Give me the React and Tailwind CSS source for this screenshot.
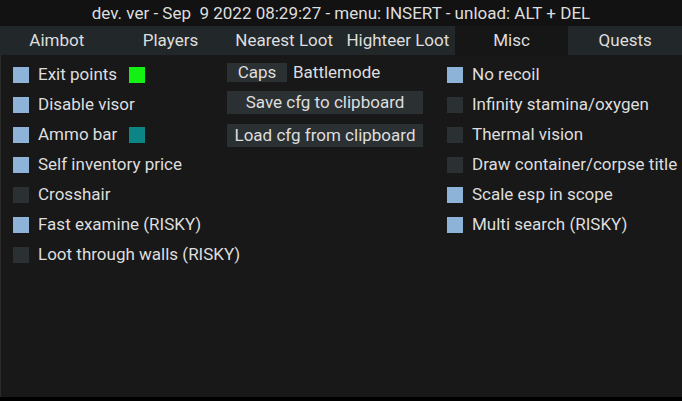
import React from 'react';

const tabs = [
  { name: 'Aimbot' },
  { name: 'Players' },
  { name: 'Nearest Loot' },
  { name: 'Highteer Loot' },
  { name: 'Misc', active: true },
  { name: 'Quests' },
];

const leftOptions = [
  { label: 'Exit points', on: true, swatch: 'bg-[#14f014]' },
  { label: 'Disable visor', on: true },
  { label: 'Ammo bar', on: true, swatch: 'bg-[#0b8585]' },
  { label: 'Self inventory price', on: true },
  { label: 'Crosshair', on: false },
  { label: 'Fast examine (RISKY)', on: true },
  { label: 'Loot through walls (RISKY)', on: false },
];

const rightOptions = [
  { label: 'No recoil', on: true },
  { label: 'Infinity stamina/oxygen', on: false },
  { label: 'Thermal vision', on: false },
  { label: 'Draw container/corpse title', on: false },
  { label: 'Scale esp in scope', on: true },
  { label: 'Multi search (RISKY)', on: true },
];

function Checkbox({ on }) {
  return (
    <div className={`w-[16px] h-[16px] shrink-0 ${on ? 'bg-[#8db3d9]' : 'bg-[#2b3033]'}`} />
  );
}

function Option({ label, on, swatch }) {
  return (
    <div className="h-[30px] flex items-center whitespace-nowrap">
      <Checkbox on={on} />
      <span className="ml-[9px]">{label}</span>
      {swatch && <div className={`ml-[12px] w-[16px] h-[16px] shrink-0 ${swatch}`} />}
    </div>
  );
}

export default function App() {
  return (
    <div
      className="w-[682px] h-[401px] bg-black text-[#dedede] text-[17px] overflow-hidden flex flex-col"
      style={{ fontFamily: 'Roboto, "Liberation Sans", sans-serif' }}
    >
      {/* title */}
      <div className="h-[26px] bg-[#121212] flex items-center justify-center whitespace-pre leading-none">
        dev. ver - Sep  9 2022 08:29:27 - menu: INSERT - unload: ALT + DEL
      </div>

      {/* tabs */}
      <div className="h-[29px] flex">
        {tabs.map((t) => (
          <div
            key={t.name}
            className={`flex-1 flex items-center justify-center whitespace-nowrap ${
              t.active ? 'bg-[#161616]' : 'bg-[#22282a]'
            }`}
          >
            {t.name}
          </div>
        ))}
      </div>

      {/* content */}
      <div className="h-[342px] shrink-0 bg-[#181818] border-l border-[#2a2a2a] flex">
        <div className="w-[226px] pl-[12px] pt-[5px] flex flex-col">
          {leftOptions.map((o) => (
            <Option key={o.label} {...o} />
          ))}
        </div>

        <div className="w-[220px] pt-[8px] flex flex-col">
          <div className="h-[19px] flex items-center whitespace-nowrap">
            <div className="h-[19px] w-[60px] bg-[#2b3033] flex items-center justify-center">Caps</div>
            <span className="ml-[6px]">Battlemode</span>
          </div>
          <div className="mt-[9px] h-[23px] w-[196px] bg-[#2b3033] flex items-center justify-center whitespace-nowrap">
            Save cfg to clipboard
          </div>
          <div className="mt-[10px] h-[23px] w-[196px] bg-[#2b3033] flex items-center justify-center whitespace-nowrap">
            Load cfg from clipboard
          </div>
        </div>

        <div className="flex-1 pt-[5px] flex flex-col">
          {rightOptions.map((o) => (
            <Option key={o.label} {...o} />
          ))}
        </div>
      </div>
    </div>
  );
}
